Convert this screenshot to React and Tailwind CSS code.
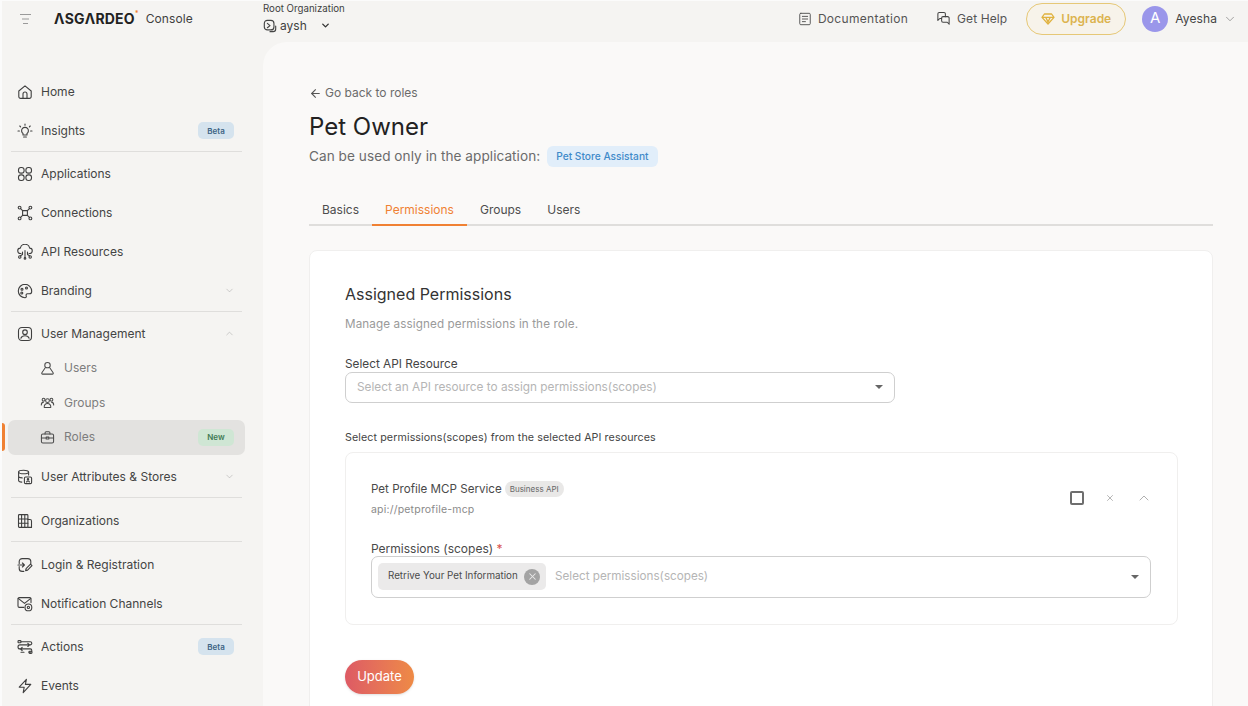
import { ArrowLeft, ChevronDown, ChevronUp, X } from "lucide-react";

const Ico = ({ size = 16, w = 1.1, children, className = "text-[#3f3f3f]" }) => (
    <svg width={size} height={size} viewBox="0 0 16 16" fill="none" stroke="currentColor" strokeWidth={w} strokeLinecap="round" strokeLinejoin="round" className={`shrink-0 ${className}`}>
        {children}
    </svg>
);

const icons = {
    home: <><path d="M1.8 7 8 1.8 14.2 7v5.6a1.8 1.8 0 0 1-1.8 1.8H3.6a1.8 1.8 0 0 1-1.8-1.8Z" /><path d="M6 14.4V10a2 2 0 0 1 4 0v4.4" /></>,
    insights: <><path d="M6 10.5a3.4 3.4 0 1 1 4 0V12H6Z" /><path d="M6.6 14h2.8M8 1v1.2M2.8 3 3.6 3.8M13.2 3l-.8.8M1 8h1.4M13.6 8H15" /></>,
    apps: <><rect x="1.5" y="1.5" width="5.6" height="5.6" rx="2.4" /><rect x="8.9" y="1.5" width="5.6" height="5.6" rx="2.4" /><rect x="1.5" y="8.9" width="5.6" height="5.6" rx="2.4" /><rect x="8.9" y="8.9" width="5.6" height="5.6" rx="2.4" /></>,
    connections: <><circle cx="2.6" cy="2.6" r="1.4" /><circle cx="13.4" cy="2.6" r="1.4" /><circle cx="2.6" cy="13.4" r="1.4" /><circle cx="13.4" cy="13.4" r="1.4" /><path d="M3.6 3.6 5.6 5.6M12.4 3.6l-2 2M3.6 12.4l2-2M12.4 12.4l-2-2M5.6 5.6h4.8v4.8H5.6Z" /></>,
    api: <><path d="M4 9.5H3.6a2.7 2.7 0 0 1-.3-5.4 4.8 4.8 0 0 1 9.4 0 2.7 2.7 0 0 1-.3 5.4H12" /><path d="M8 6.5v7M5.5 8v2.5l-2 1.2M10.5 8v2.5l2 1.2" /><circle cx="2.8" cy="13" r="1.2" /><circle cx="8" cy="14.4" r=".8" /><circle cx="13.2" cy="13" r="1.2" /></>,
    branding: <><path d="M8 1.3a6.7 6.7 0 1 0 0 13.4c1.3 0 1.6-1 1.2-1.9-.5-1 .1-2 1.2-2h2c1.3 0 2.3-1 2.3-2.3 0-4-3-7.2-6.7-7.2Z" /><circle cx="5" cy="6.2" r="1" /><circle cx="9.5" cy="5" r="1" /><circle cx="4.8" cy="10" r="1" /></>,
    um: <><rect x="1.5" y="1.5" width="13" height="13" rx="3.4" /><circle cx="8" cy="6.2" r="2.3" /><path d="M3.9 12.2c.6-1.6 2.2-2.4 4.1-2.4s3.5.8 4.1 2.4" /></>,
    users: <><circle cx="8" cy="4.4" r="2.9" /><path d="M5.4 7.4 2 12.6c-.4.7 0 1.4.8 1.4h10.4c.8 0 1.2-.7.8-1.4l-3.4-5.2" /></>,
    groups: <><circle cx="8" cy="6" r="2" /><circle cx="3.8" cy="5" r="1.5" /><circle cx="12.2" cy="5" r="1.5" /><path d="M4.5 13.4c-.3-2.6 1.2-4.4 3.5-4.4s3.8 1.8 3.5 4.4ZM1.4 10.6c0-1.5.9-2.8 2.3-3M14.6 10.6c0-1.5-.9-2.8-2.3-3" /></>,
    roles: <><rect x="1.5" y="4.2" width="13" height="9.6" rx="1.6" /><path d="M5.4 4.2V3a1.2 1.2 0 0 1 1.2-1.2h2.8A1.2 1.2 0 0 1 10.6 3v1.2M1.5 8.6h4.8M9.7 8.6h4.8M6.6 7.6h2.8v2H6.6Z" /></>,
    attrs: <><ellipse cx="6.6" cy="3" rx="5" ry="1.8" /><path d="M1.6 3v8.4c0 .9 1.4 1.5 3.2 1.7M1.6 7.2c0 .9 1.6 1.6 3.6 1.7M11.6 3v3" /><rect x="7.4" y="8" width="7.2" height="6.6" rx="1.2" /><circle cx="11" cy="10.3" r=".7" /><path d="M9.6 13c.2-.7.7-1 1.4-1s1.2.3 1.4 1" /></>,
    org: <><rect x="1.5" y="1.6" width="9.4" height="12.8" rx=".8" /><path d="M1.5 6h9.4M1.5 10.2h9.4M4.6 1.6v12.8M7.8 1.6v12.8M10.9 6.5h2.2a1.4 1.4 0 0 1 1.4 1.4v6.5h-3.6" /></>,
    login: <><path d="M2.2 6.4V4.6a3 3 0 0 1 3-3h5.6a3 3 0 0 1 3 3v2.2M2.2 9.6v1.8a3 3 0 0 0 3 3h1.6" /><path d="M1 8h6M5.4 6l2 2-2 2" /><path d="m8.6 13.6.5-2 4.4-4.4 1.5 1.5-4.4 4.4Z" /></>,
    notify: <><path d="M14 6.6V3a1.4 1.4 0 0 0-1.4-1.4H2.4A1.4 1.4 0 0 0 1 3v7a1.4 1.4 0 0 0 1.4 1.4h4.4" /><path d="m1.2 2.4 6.3 5 6.3-5" /><circle cx="11.4" cy="11.4" r="3.4" /><circle cx="11.4" cy="11.4" r="1.1" /></>,
    actions: <><rect x="1" y="1.6" width="3" height="2.2" rx=".8" /><rect x="12" y="12.2" width="3" height="2.2" rx=".8" /><path d="M4 2.7h9.2a1.6 1.6 0 0 1 0 3.2H3a2 2 0 0 0 0 4h10.2a1.6 1.6 0 0 1 0 3.2H12M7 13.3H4M10.8 4.3l1.8 1.6-1.8 1.6M5.2 8.4 3.4 10l1.8 1.5" /></>,
    events: <path d="M9.4 1.4 2.2 9.2h5l-1 5.4 7.6-8.2H8.4Z" />,
};

const Badge = ({ label, green }) => (
    <span className={`ml-auto mr-[11px] flex h-[17px] w-[36px] items-center justify-center rounded-[5px] text-[8px] font-semibold ${green ? "bg-[#cfe6d4] text-[#3f7a55]" : "bg-[#d5e3ee] text-[#3d6484]"}`}>
        {label}
    </span>
);

const Row = ({ icon, label, badge, green, chevron, sub, active }) => (
    <div className={`relative flex items-center ${sub ? "h-[34.5px] pl-[32px] text-[#7d7d7d]" : "h-[39px] pl-[9px] text-[#444]"} ${active ? "rounded-[7px] bg-[#e3e2e0]" : ""}`}>
        {active && <span className="absolute left-[-6px] top-[3px] h-[28px] w-[3px] rounded-r-sm bg-[#f08133]" />}
        <Ico className={sub ? "text-[#4a4a4a]" : "text-[#3f3f3f]"} size={sub ? 15 : 16}>{icons[icon]}</Ico>
        <span className={`${sub ? "ml-[9px]" : "ml-[8px]"} text-[12px]`}>{label}</span>
        {badge && <Badge label={badge} green={green} />}
        {chevron === "down" && <ChevronDown size={11} strokeWidth={1} className="ml-auto mr-[10px] text-[#9a9a9a]" />}
        {chevron === "up" && <ChevronUp size={11} strokeWidth={1} className="ml-auto mr-[10px] text-[#9a9a9a]" />}
    </div>
);

const Divider = () => <div className="mx-[3px] mb-[2px] mt-[1px] h-px bg-[#dfdedc]" />;

const Sidebar = () => (
    <aside className="w-[261px] shrink-0 pl-[6px] pr-[18px] pt-[30px]">
        <Row icon="home" label="Home" />
        <Row icon="insights" label="Insights" badge="Beta" />
        <Divider />
        <Row icon="apps" label="Applications" />
        <Row icon="connections" label="Connections" />
        <Row icon="api" label="API Resources" />
        <Row icon="branding" label="Branding" chevron="down" />
        <Divider />
        <Row icon="um" label="User Management" chevron="up" />
        <div className="-mt-[2px]">
            <Row sub icon="users" label="Users" />
            <Row sub icon="groups" label="Groups" />
            <Row sub active icon="roles" label="Roles" badge="New" green />
        </div>
        <div className="mt-[2.5px]"><Row icon="attrs" label="User Attributes & Stores" chevron="down" /></div>
        <Divider />
        <div className="mt-[3px]"><Row icon="org" label="Organizations" /></div>
        <Divider />
        <div className="mt-[3px]"><Row icon="login" label="Login & Registration" /></div>
        <Row icon="notify" label="Notification Channels" />
        <Divider />
        <div className="mt-[1px]"><Row icon="actions" label="Actions" badge="Beta" /></div>
        <Row icon="events" label="Events" />
    </aside>
);

const Header = () => (
    <header className="flex h-[41px] shrink-0 items-center pb-[6px]">
        <div className="flex w-[261px] shrink-0 items-center pl-[17px]">
            <svg width="13" height="12" viewBox="0 0 13 12" fill="none" stroke="#9a9a9a" strokeWidth="1" className="shrink-0">
                <path d="M1 1.5h11M3 6h7M4 10.5h5" />
            </svg>
            <span className="ml-[22px] text-[14px] font-bold tracking-[0.2px] text-[#222]">ΛSGΛRDEO</span>
            <span className="relative -top-[4px] text-[7px] font-bold text-[#f08133]">*</span>
            <span className="ml-[7px] text-[12px] tracking-[0.1px] text-[#3f3f3f]">Console</span>
        </div>
        <div className="-mt-[2px] flex flex-col">
            <span className="text-[9.7px] leading-[12px] text-[#3f3f3f]">Root Organization</span>
            <div className="mt-[4px] flex items-center text-[#3f3f3f]">
                <Ico size={14} w={1.3} className="text-[#444]"><rect x="1.5" y="1.5" width="11" height="11" rx="3.5" /><path d="M5 5 8 7.5 5 10M8 14.5h3.5a3 3 0 0 0 3-3V8" /></Ico>
                <span className="ml-[3px] text-[12px] leading-[14px]">aysh</span>
                <ChevronDown size={11} strokeWidth={3} className="ml-[13px] text-[#333]" />
            </div>
        </div>
        <div className="ml-auto flex items-center pr-[11px]">
            <Ico size={14} className="text-[#555]"><rect x="2" y="1.5" width="12" height="13" rx="1.2" /><path d="M5 5h6M5 8h6M5 11h3.5" /></Ico>
            <span className="ml-[6px] text-[12px] tracking-[0.3px] text-[#555]">Documentation</span>
            <Ico size={15} className="ml-[28px] text-[#444]"><path d="M10 6V3a1.5 1.5 0 0 0-1.5-1.5h-5A1.5 1.5 0 0 0 2 3v7l2-2h2" /><path d="M6 7.5A1.5 1.5 0 0 1 7.5 6h5A1.5 1.5 0 0 1 14 7.5V14l-2-2H7.5A1.5 1.5 0 0 1 6 10.5Z" /></Ico>
            <span className="ml-[6px] text-[12px] tracking-[0.1px] text-[#555]">Get Help</span>
            <div className="ml-[19px] flex h-[32px] w-[100px] items-center justify-center rounded-full border border-[#e6c877] bg-[#f7f3ea]">
                <svg width="14" height="12" viewBox="0 0 14 12" fill="none" stroke="#e0b23f" strokeWidth="1.3" strokeLinejoin="round" className="shrink-0">
                    <path d="M3.4 1h7.2L13 4.4 7 11 1 4.4ZM1 4.4h12M4.8 4.4 7 9l2.2-4.6" />
                </svg>
                <span className="ml-[6px] text-[12px] font-semibold text-[#dcb34f]">Upgrade</span>
            </div>
            <div className="ml-[16px] flex h-[26px] w-[26px] items-center justify-center rounded-full bg-[#9a96ea] text-[15px] text-white">A</div>
            <span className="ml-[7px] text-[12px] tracking-[0.1px] text-[#444]">Ayesha</span>
            <ChevronDown size={14} strokeWidth={1} className="ml-[6px] text-[#666]" />
        </div>
    </header>
);

const Caret = () => <span className="h-0 w-0 border-x-[4px] border-t-[4px] border-x-transparent border-t-[#666]" />;

const Tabs = () => (
    <div className="mt-[27px] flex h-[32px] border-b-2 border-[#dfdedc]">
        {["Basics", "Permissions", "Groups", "Users"].map((t) => (
            <div key={t} className={`-mb-[2px] flex items-center border-b-2 px-[13px] pt-[1px] text-[12px] ${t === "Permissions" ? "border-[#f08133] text-[#f08133]" : "border-transparent text-[#4d4d4d]"}`}>
                {t}
            </div>
        ))}
    </div>
);

const PermissionCard = () => (
    <div className="mt-[7px] h-[173px] w-[833px] rounded-[8px] border border-[#f0efee] bg-white px-[25px] pt-[28px]">
        <div className="flex items-start">
            <div>
                <div className="flex items-center">
                    <span className="text-[11.6px] text-[#4a4a4a]">Pet Profile MCP Service</span>
                    <span className="ml-[3px] flex h-[16px] items-center rounded-full bg-[#e9e8e7] px-[5px] text-[8px] text-[#666]">Business API</span>
                </div>
                <div className="mt-[4px] text-[10.5px] tracking-[0.2px] text-[#8a8a8a]">api://petprofile-mcp</div>
            </div>
            <div className="ml-auto mt-[9px] flex items-center">
                <span className="h-[14px] w-[14px] rounded-[2px] border-2 border-[#6e6e6e]" />
                <X size={10} strokeWidth={1.3} className="ml-[21px] text-[#777]" />
                <ChevronUp size={16} strokeWidth={1} className="ml-[21px] text-[#888]" />
            </div>
        </div>
        <div className="mt-[24px] text-[12px] leading-[14px] text-[#4a4a4a]">
            Permissions (scopes) <span className="text-[#d9534f]">*</span>
        </div>
        <div className="flex h-[42px] w-[780px] items-center rounded-[7px] border border-[#cfcfcf] pl-[6px] pr-[11px]">
            <div className="flex h-[27px] w-[168px] items-center justify-between rounded-[5px] bg-[#ebeaea] pl-[10px] pr-[6px]">
                <span className="text-[9.8px] text-[#4a4a4a]">Retrive Your Pet Information</span>
                <span className="flex h-[16px] w-[16px] items-center justify-center rounded-full bg-[#a3a3a3]"><X size={11} strokeWidth={2.2} className="text-[#ebeaea]" /></span>
            </div>
            <span className="ml-[9px] pt-[1px] text-[11.7px] text-[#b5b5b5]">Select permissions(scopes)</span>
            <span className="ml-auto flex"><Caret /></span>
        </div>
    </div>
);

export default function App() {
    return (
        <div className="flex h-[706px] w-[1248px] flex-col overflow-hidden border-l-2 border-t border-[#fbfbfb] bg-[#f5f4f2] font-['Inter',sans-serif]">
            <Header />
            <div className="flex min-h-0 flex-1">
                <Sidebar />
                <main className="flex-1 rounded-tl-[24px] bg-[#faf9f8] pl-[46px] pr-[35px] pt-[42px]">
                    <div className="flex items-center text-[12px] text-[#6b6b6b]">
                        <ArrowLeft size={13} strokeWidth={2} className="text-[#555]" />
                        <span className="ml-[3px]">Go back to roles</span>
                    </div>
                    <h1 className="mt-[10px] text-[24px] font-normal leading-[30px] text-[#222]">Pet Owner</h1>
                    <div className="mt-[4px] flex items-center">
                        <span className="text-[13.6px] tracking-[0.05px] text-[#6b6b6b]">Can be used only in the application:</span>
                        <span className="ml-[7px] flex h-[21px] items-center rounded-[6px] bg-[#e1eefa] px-[9px] text-[10.2px] font-medium text-[#3f8ac9]">Pet Store Assistant</span>
                    </div>
                    <Tabs />
                    <section className="mt-[24px] h-[500px] rounded-t-[8px] border border-[#f0efee] bg-white pl-[35px] pt-[33px]">
                        <h2 className="text-[16px] font-normal leading-[20px] text-[#333]">Assigned Permissions</h2>
                        <p className="mt-[12px] text-[11.7px] tracking-[0.1px] text-[#9a9a9a]">Manage assigned permissions in the role.</p>
                        <div className="mt-[23px] text-[11.8px] leading-[14px] text-[#444]">Select API Resource</div>
                        <div className="mt-[1px] flex h-[31px] w-[550px] items-center justify-between rounded-[7px] border border-[#cfcfcf] pl-[11px] pr-[11px]">
                            <span className="pt-[1px] text-[11.8px] text-[#b5b5b5]">Select an API resource to assign permissions(scopes)</span>
                            <Caret />
                        </div>
                        <div className="mt-[28px] text-[10.7px] leading-[14px] tracking-[0.1px] text-[#444]">Select permissions(scopes) from the selected API resources</div>
                        <PermissionCard />
                        <button className="mt-[35px] flex h-[34px] w-[69px] items-center justify-center rounded-full bg-gradient-to-r from-[#dd5a64] to-[#ee8a45] text-[13px] text-white shadow-sm">Update</button>
                    </section>
                </main>
            </div>
        </div>
    );
}
